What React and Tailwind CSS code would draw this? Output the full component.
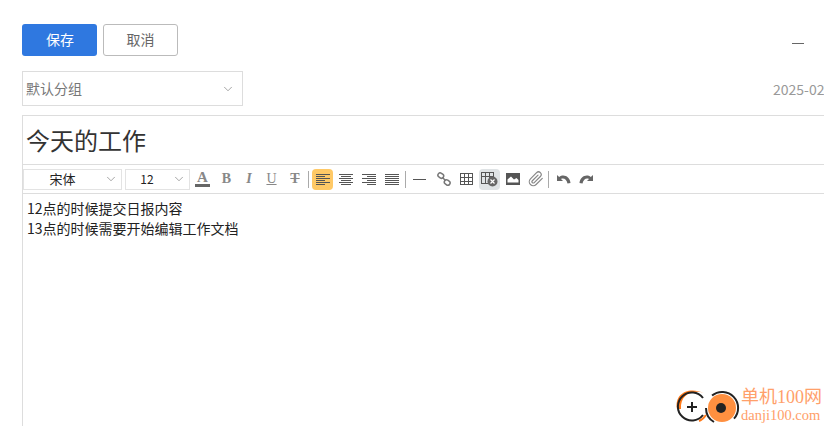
import { ChevronDown } from 'lucide-react';

const Lines = ({ rows }) => (
  <svg width="14" height="12" viewBox="0 0 14 12" stroke="#555" strokeWidth="1" shapeRendering="crispEdges">
    {rows.map((r, i) => (
      <line key={i} x1={r[0]} x2={r[1]} y1={i * 2 + 1.5} y2={i * 2 + 1.5} />
    ))}
  </svg>
);

const left = [[0, 14], [0, 9], [0, 14], [0, 9], [0, 14], [0, 9]];
const center = [[0, 14], [2, 12], [0, 14], [2, 12], [0, 14], [2, 12]];
const right = [[0, 14], [5, 14], [0, 14], [5, 14], [0, 14], [5, 14]];
const justify = [[0, 14], [0, 14], [0, 14], [0, 14], [0, 14], [0, 14]];

const Btn = ({ children, className = 'w-[23px]' }) => (
  <div className={`h-[21px] flex items-center justify-center shrink-0 ${className}`}>{children}</div>
);

const Sep = ({ className = 'mx-[1px]' }) => <div className={`w-px h-[17px] bg-[#aaa] shrink-0 ${className}`} />;

const Letter = ({ children, className = '' }) => (
  <span className={`text-[14px] leading-none text-[#888] font-bold font-['Liberation_Serif',serif] ${className}`}>{children}</span>
);

function Toolbar() {
  return (
    <div className="h-[29px] flex items-center border-b border-[#ddd]">
      <div className="w-[99px] h-[21px] border border-[#e3e3e3] flex items-center shrink-0">
        <span className="flex-1 text-center text-[13px] text-[#222] pr-[3px] pb-px">宋体</span>
        <ChevronDown size={14} strokeWidth={1} className="text-[#666] mr-[3px]" />
      </div>
      <div className="w-[65px] h-[21px] ml-[3px] border border-[#e3e3e3] flex items-center shrink-0">
        <span className="flex-1 text-center text-[12px] text-[#222] pr-[4px] pb-px">12</span>
        <ChevronDown size={14} strokeWidth={1} className="text-[#666] mr-[3px]" />
      </div>
      <Btn className="w-[25px]">
        <div className="flex flex-col items-center">
          <span className="text-[15px] leading-[12px] text-[#888] font-bold font-['Liberation_Serif',serif]">A</span>
          <div className="w-[15px] h-[3px] bg-[#666] mt-[1px]" />
        </div>
      </Btn>
      <Btn><Letter>B</Letter></Btn>
      <Btn className="w-[22px]"><Letter className="italic">I</Letter></Btn>
      <Btn><Letter className="underline font-normal">U</Letter></Btn>
      <Btn className="w-[24px]"><Letter className="line-through">T</Letter></Btn>
      <Sep className="ml-[1px] mr-[2px]" />
      <Btn className="w-[21px] ml-[1px] rounded-[4px] bg-[#ffc966]"><Lines rows={left} /></Btn>
      <Btn className="w-[25px]"><Lines rows={center} /></Btn>
      <Btn className="w-[21px]"><Lines rows={right} /></Btn>
      <Btn className="w-[25px]"><Lines rows={justify} /></Btn>
      <Sep />
      <Btn className="w-[25px]">
        <div className="w-[13px] h-px bg-[#555]" />
      </Btn>
      <Btn>
        <svg width="14" height="14" viewBox="0 0 14 14" fill="none" stroke="#777" strokeWidth="1.5">
          <rect x="0.8" y="1.3" width="6" height="4.4" rx="2.2" transform="rotate(35 3.7 3.5)" />
          <rect x="7.2" y="8.3" width="6" height="4.4" rx="2.2" transform="rotate(35 10.2 10.5)" />
          <line x1="5.5" y1="5.5" x2="8.5" y2="8.5" />
        </svg>
      </Btn>
      <Btn className="w-[22px]">
        <svg width="13" height="12" viewBox="0 0 13 12" fill="none" stroke="#555" strokeWidth="1" shapeRendering="crispEdges">
          <rect x="0.5" y="0.5" width="12" height="11" />
          <line x1="4.5" x2="4.5" y1="0" y2="12" />
          <line x1="8.5" x2="8.5" y1="0" y2="12" />
          <line x1="0" x2="13" y1="4.5" y2="4.5" />
          <line x1="0" x2="13" y1="8" y2="8" />
        </svg>
      </Btn>
      <Btn className="w-[21px] ml-[2px] rounded-[4px] bg-[#dfe3e5]">
        <svg width="17" height="15" viewBox="0 0 17 15" fill="none" stroke="#555" strokeWidth="1">
          <rect x="0.5" y="0.5" width="12" height="11" />
          <line x1="4.5" x2="4.5" y1="0" y2="12" />
          <line x1="8.5" x2="8.5" y1="0" y2="12" />
          <line x1="0" x2="13" y1="4.5" y2="4.5" />
          <circle cx="11.5" cy="9.5" r="5" fill="#666" stroke="none" />
          <path d="M9.5 7.5l4 4M13.5 7.5l-4 4" stroke="#fff" strokeWidth="1.2" />
        </svg>
      </Btn>
      <Btn className="w-[24px] ml-[1px]">
        <svg width="14" height="12" viewBox="0 0 14 12">
          <path fillRule="evenodd" fill="#555" d="M0 0h14v12H0zM1.5 9.5h11V7L10.5 5 8 6.5 5 3.5 1.5 6.5z" />
        </svg>
      </Btn>
      <Btn className="w-[21px]">
        <svg width="16" height="16" viewBox="0 0 24 24" fill="none" stroke="#888" strokeWidth="1.8" strokeLinecap="round" strokeLinejoin="round">
          <path d="M21.4 11.05l-9.2 9.2a6 6 0 0 1-8.5-8.5l9.2-9.2a4 4 0 0 1 5.66 5.66l-9.2 9.2a2 2 0 0 1-2.83-2.83l8.5-8.49" />
        </svg>
      </Btn>
      <Sep className="ml-[2px] mr-[1px]" />
      <Btn className="w-[25px] ml-[1px]">
        <svg width="14" height="11" viewBox="0 0 14 11">
          <path fill="#666" d="M0 1v6h6L4 5C6.5 3.8 9.5 4.8 10.5 9.5L13.5 9C12.8 2.5 6.5-.3 2.2 3z" />
        </svg>
      </Btn>
      <Btn className="w-[20px]">
        <svg width="14" height="11" viewBox="0 0 14 11">
          <path fill="#666" d="M14 1v6H8l2-2C7.5 3.8 4.5 4.8 3.5 9.5L.5 9C1.2 2.5 7.5-.3 11.8 3z" />
        </svg>
      </Btn>
    </div>
  );
}

function Watermark() {
  return (
    <div className="absolute left-[674px] top-[384px] flex items-center">
      <svg width="66" height="42" viewBox="0 0 66 42" fill="none">
        <path d="M3 25C0 10 14 2 30 9C18 5 6 11 7 25z" fill="#ff7a1a" />
        <path d="M25 37C28 36 30 34 32 31" stroke="#ff7a1a" strokeWidth="2" />
        <path d="M29 14A14 14 0 1 0 29 31" stroke="#222" strokeWidth="2" />
        <path d="M13 23h10M18 18v10" stroke="#222" strokeWidth="2" />
        <circle cx="48" cy="24" r="14" fill="#ff9040" />
        <path d="M38 11.5A16 16 0 0 1 60 34.6" stroke="#222" strokeWidth="2" />
        <path d="M32 24A16 16 0 0 0 40 38" stroke="#222" strokeWidth="2" />
        <circle cx="47" cy="24" r="5" fill="#222" />
      </svg>
      <div className="ml-[1px] flex flex-col font-['Liberation_Serif','Noto_Sans_CJK_SC',serif] text-[#ffa06a]">
        <span className="text-[18px] leading-[20px] whitespace-nowrap">单机100网</span>
        <span className="text-[14.5px] leading-[17px] whitespace-nowrap">danji100.com</span>
      </div>
    </div>
  );
}

export default function App() {
  return (
    <div className="relative w-[824px] h-[426px] overflow-hidden bg-white font-['Noto_Sans_CJK_SC','Liberation_Sans',sans-serif]">
      <div className="w-[1000px] pl-[22px] pt-6">
        <div className="flex items-start">
          <button className="w-[75px] h-8 pl-px pb-[2px] rounded-[3px] bg-[#2f78e0] text-white text-sm">保存</button>
          <button className="w-[75px] h-8 ml-[6px] pb-[2px] rounded-[3px] border border-[#bbb] text-[#666] text-sm">取消</button>
          <div className="w-3 h-px bg-[#666] ml-[614px] mt-[19px]" />
        </div>
        <div className="flex items-center mt-[15px]">
          <div className="w-[221px] h-[35px] border border-[#ddd] flex items-center justify-between pl-[3px] pr-[7px] text-sm text-[#777]">
            <span className="pb-[2px]">默认分组</span>
            <ChevronDown size={14} strokeWidth={1} className="text-[#666]" />
          </div>
          <span className="ml-[530px] text-sm text-[#999] whitespace-nowrap">2025-02-18 10:30</span>
        </div>
        <div className="mt-[9px] h-[400px] border border-[#ddd]">
          <div className="h-[49px] pb-px border-b border-[#ddd] pl-[3px] flex items-center text-2xl text-[#333]">今天的工作</div>
          <Toolbar />
          <div className="pl-1 pt-[4px] text-sm leading-5 text-[#222]">
            <p>12点的时候提交日报内容</p>
            <p>13点的时候需要开始编辑工作文档</p>
          </div>
        </div>
      </div>
      <Watermark />
    </div>
  );
}
